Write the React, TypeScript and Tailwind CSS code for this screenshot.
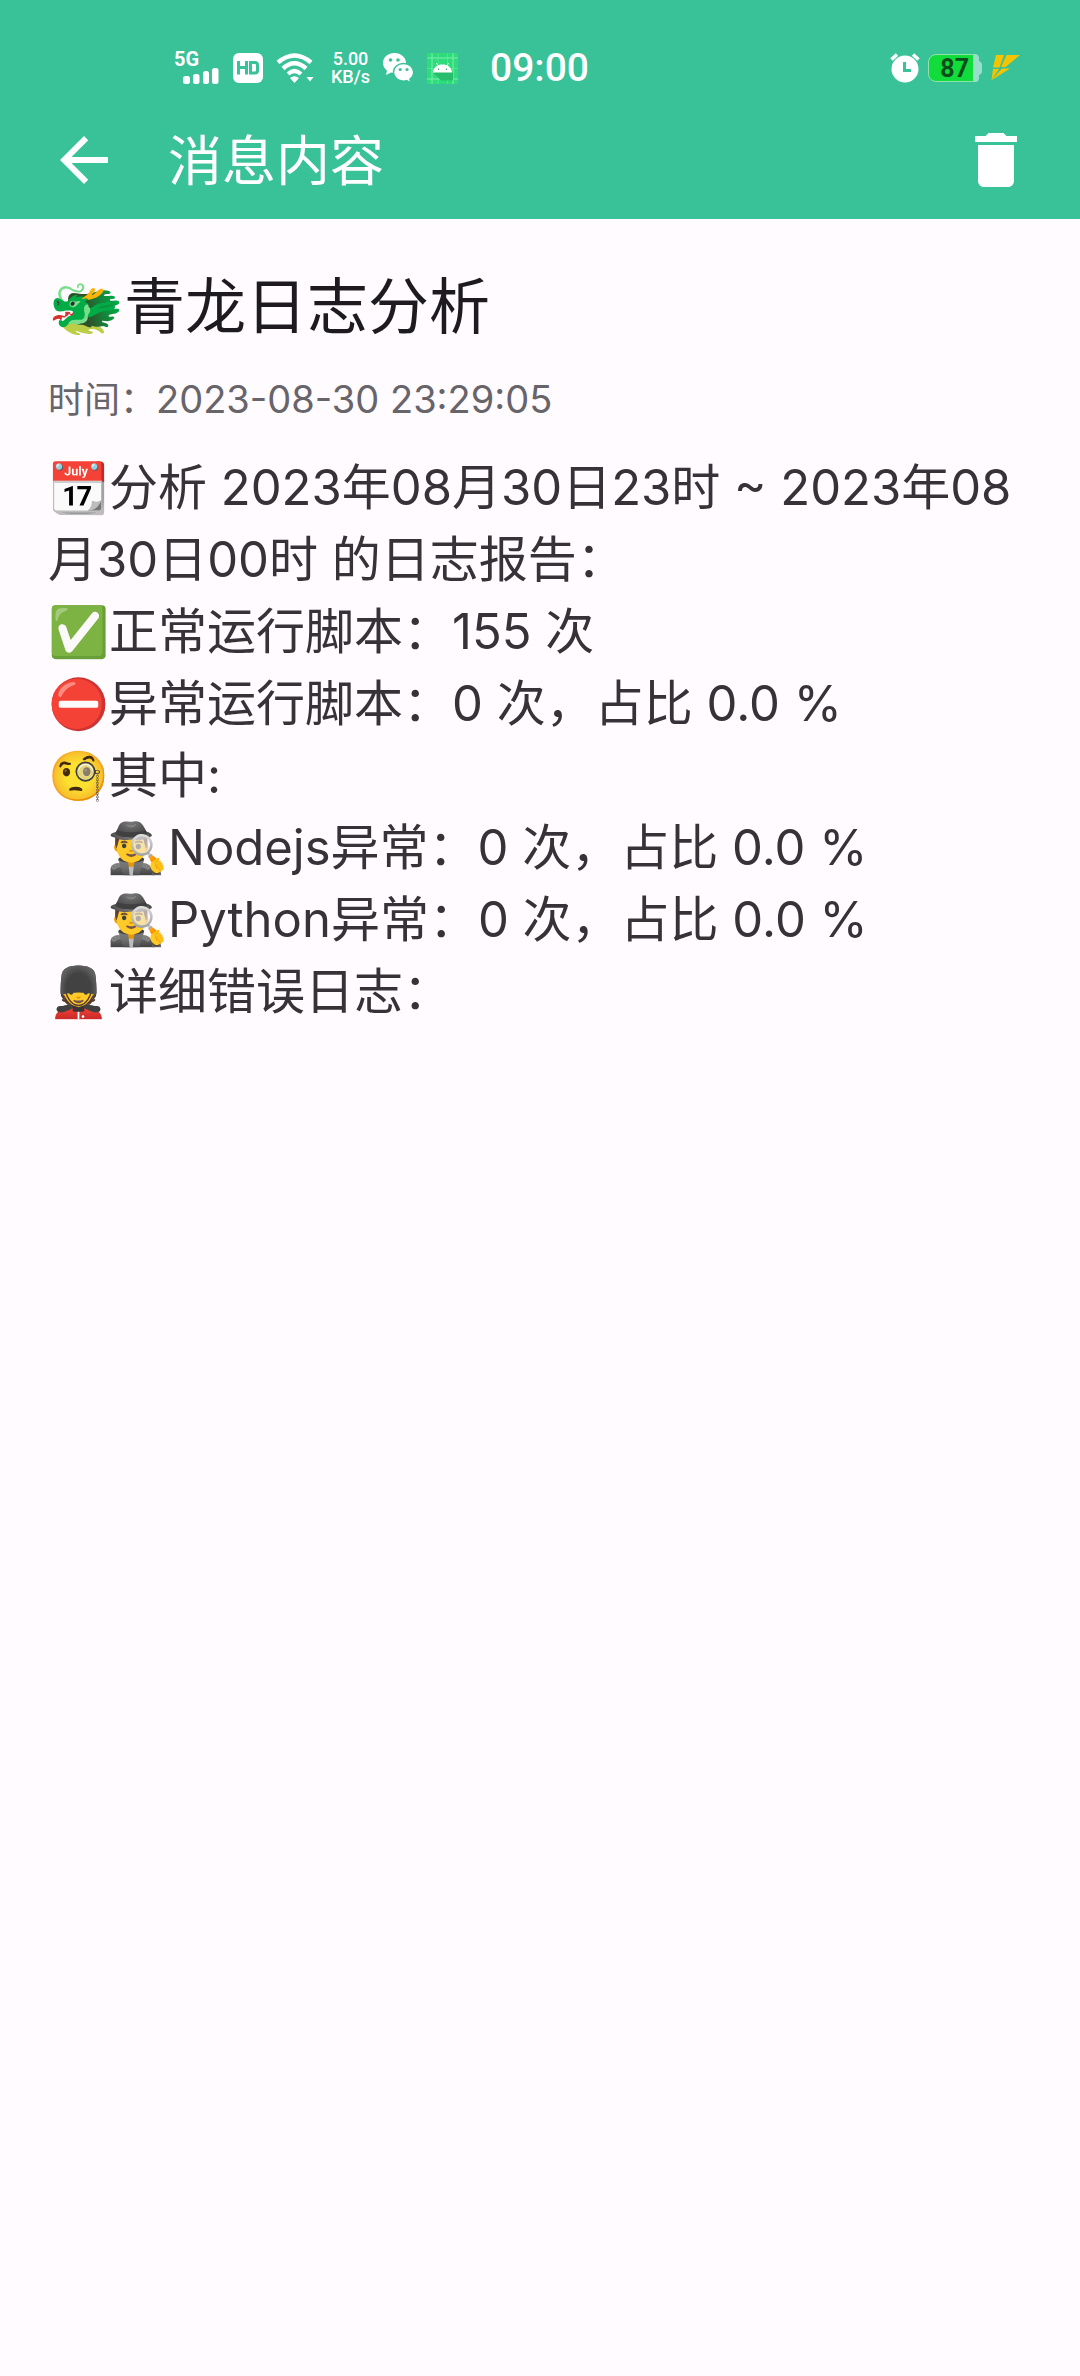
import type { ReactNode } from 'react'

function SignalIcon() {
  return (
    <div className="flex w-[46px] flex-col" aria-label="5G signal">
      <span className="h-[15px] text-[20px] leading-[15px] font-bold">5G</span>
      <svg className="ml-2 h-[17px] w-[38px]" viewBox="0 0 38 17" fill="currentColor">
        <rect x="1" y="9" width="7" height="8" rx="2.5" />
        <rect x="11" y="7" width="6.500" height="10" rx="2.500" />
        <rect x="21" y="4" width="6" height="13" rx="2.500" />
        <rect x="30" y="1" width="6.500" height="16" rx="2.500" />
      </svg>
    </div>
  )
}

function HdIcon() {
  return (
    <svg className="size-[30px]" viewBox="0 0 30 30" aria-label="HD">
      <rect width="30" height="30" rx="6" fill="#fff" />
      <path
        d="M5.500 8v13.500M13.500 8v13.500M5.500 14.500h8M17.500 9.500v10.500h4.500q2.500 0 2.500-2.500v-5.500q0-2.500-2.500-2.500z"
        fill="none"
        stroke="#39c197"
        strokeWidth="3"
      />
    </svg>
  )
}

function WifiIcon() {
  return (
    <svg className="h-[30px] w-[38px]" viewBox="0 0 38 30" fill="none" stroke="#fff" aria-label="Wi-Fi">
      <path d="M2 9.500Q18.500-4.500 35 9.500" strokeWidth="4.500" />
      <path d="M7 15.500Q18.500 5 30 15.500" strokeWidth="4.500" />
      <path d="M12 21Q18.500 15 25 21" strokeWidth="4.200" />
      <path d="M14 25Q18.500 21.500 23 25L18.500 30z" fill="#fff" stroke="none" />
      <path d="M30.500 24h7L34 28.500z" fill="#fff" stroke="none" />
    </svg>
  )
}

function WeChatIcon() {
  return (
    <svg className="h-[30px] w-[31px]" viewBox="0 0 31 30" aria-label="WeChat">
      <path
        d="M11.500 0C5 0 0 4.300 0 10c0 3 1.500 5.600 4 7.500L3 22l5-2.600c1.100.3 2.300.4 3.500.4C18 19.800 23 15.500 23 10S18 0 11.500 0z"
        fill="#fff"
      />
      <path
        d="M20.500 10.500c-5.600 0-10 3.800-10 8.800s4.400 8.800 10 8.800c1.100 0 2.200-.2 3.200-.5l4 2.400-.8-3.900c2.300-1.600 3.700-4 3.700-6.800 0-5-4.500-8.800-10.100-8.800z"
        fill="#fff"
        stroke="#39c197"
        strokeWidth="1.400"
      />
      <g fill="#39c197">
        <circle cx="7.500" cy="7" r="1.800" />
        <circle cx="15" cy="7" r="1.800" />
        <circle cx="17.200" cy="16.500" r="1.600" />
        <circle cx="24" cy="16.500" r="1.600" />
      </g>
    </svg>
  )
}

function AndroidIcon() {
  return (
    <svg className="size-[31px]" viewBox="0 0 31 31" aria-label="Android">
      <rect width="31" height="31" rx="1.500" fill="#2fdc7c" />
      <path d="M5 0v31M26 0v31M0 5h31M0 26h31" stroke="#7dedac" strokeWidth="1" />
      <path d="M11 0v31M20.500 0v31M0 15.500h31" stroke="#7dedac" strokeWidth=".4" />
      <path d="M6 19.500l8 8h12V20l-1.500-3z" fill="#27bd6c" />
      <path d="M6 19.500C6.500 14 10.500 11.500 15.500 11.500S24.500 14 25 19.500z" fill="#fff" />
      <path d="M9.500 10l1.500 3M21.500 10l-1.500 3" stroke="#fff" strokeWidth=".8" />
      <circle cx="11.500" cy="16.200" r=".7" fill="#2a8f5c" />
      <circle cx="19.500" cy="16.200" r=".7" fill="#2a8f5c" />
    </svg>
  )
}

function AlarmIcon() {
  return (
    <svg className="size-[30px]" viewBox="0 0 30 30" aria-label="Alarm">
      <circle cx="15" cy="16" r="13.500" fill="#fff" />
      <path d="M1.500 6.500L7 1.500M28.500 6.500L23 1.500" stroke="#fff" strokeWidth="3.500" />
      <path d="M14.500 9v8.500H21" fill="none" stroke="#39c197" strokeWidth="3" />
    </svg>
  )
}

function Battery() {
  return (
    <div className="flex items-center">
      <div className="flex h-7 w-[46px] items-center justify-end rounded-l-lg border border-[#8fe3b0] bg-[#12db3c] pr-1 text-[25px] leading-none font-bold text-[#0b4d1b]">
        87
      </div>
      <svg className="h-7 w-2" viewBox="0 0 8 28" fill="#97dfc8">
        <path d="M0 0h2q3 1 3 4v3q3 1 3 4v6q0 3-3 4v3q0 3-3 4H0z" />
      </svg>
    </div>
  )
}

function BoltIcon() {
  return (
    <svg className="h-[26px] w-[30px]" viewBox="0 0 30 26" fill="#f5c400" aria-label="Charging">
      <path d="M6 0H14L9.500 12.500H3z" />
      <path d="M16.500 0H30L15.500 12H11z" />
      <path d="M3 14H9L1.500 25z" />
      <path d="M12 13.500H20L1 25.500z" />
    </svg>
  )
}

function ReportLine({ nested = false, children }: { nested?: boolean; children: ReactNode }) {
  return <p className={nested ? 'pl-[59px]' : ''}>{children}</p>
}

export default function App() {
  return (
    <div className="min-h-screen bg-[#fffbff] font-[Inter,'Noto_Sans_CJK_SC',sans-serif]" lang="zh-CN">
      <header className="bg-[#39c197] text-white">
        <div className="flex h-[100px] items-center pt-9 pr-[60px] pl-[174px] font-[Roboto,sans-serif]">
          <div className="flex items-center gap-[13px]">
            <SignalIcon />
            <HdIcon />
            <WifiIcon />
            <div className="ml-1 text-center text-[18px] leading-[18px] font-medium">
              <div>5.00</div>
              <div>KB/s</div>
            </div>
            <WeChatIcon />
            <AndroidIcon />
          </div>
          <time className="ml-8 text-[39px] leading-none font-medium">09:00</time>
          <div className="ml-auto flex items-center gap-2">
            <AlarmIcon />
            <Battery />
            <BoltIcon />
          </div>
        </div>
        <div className="flex h-[119px] items-center px-12">
          <button type="button" aria-label="返回" className="shrink-0">
            <svg className="size-[72px]" viewBox="0 0 24 24" fill="currentColor">
              <path d="M20 11H7.830l5.590-5.590L12 4l-8 8 8 8 1.410-1.410L7.830 13H20v-2z" />
            </svg>
          </button>
          <h1 className="ml-12 flex-1 pt-1 text-[54px] leading-[72px]">消息内容</h1>
          <button type="button" aria-label="删除" className="shrink-0">
            <svg className="size-[72px]" viewBox="0 0 24 24" fill="currentColor">
              <path d="M6 19c0 1.100.9 2 2 2h8c1.100 0 2-.9 2-2V7H6v12zM19 4h-3.500l-1-1h-5l-1 1H5v2h14V4z" />
            </svg>
          </button>
        </div>
      </header>

      <main className="px-12 pt-12">
        <h2 className="text-[61px] leading-[80px] text-[#1d1b20]">🐲青龙日志分析</h2>
        <p className="mt-7 text-[36px] leading-[48px] text-[#67646a]">
          时间：<time className="text-[38px]">2023-08-30 23:29:05</time>
        </p>
        <div className="mt-7 text-[49px] leading-[72px] text-[#363238]">
          <ReportLine>📆分析 2023年08月30日23时 ~ 2023年08月30日00时 的日志报告：</ReportLine>
          <ReportLine>✅正常运行脚本：155 次</ReportLine>
          <ReportLine>⛔异常运行脚本：0 次，占比 0.0 %</ReportLine>
          <ReportLine>🧐其中:</ReportLine>
          <ReportLine nested>🕵️‍♂️Nodejs异常：0 次，占比 0.0 %</ReportLine>
          <ReportLine nested>🕵️‍♂️Python异常：0 次，占比 0.0 %</ReportLine>
          <ReportLine>💂详细错误日志：</ReportLine>
        </div>
      </main>
    </div>
  )
}
